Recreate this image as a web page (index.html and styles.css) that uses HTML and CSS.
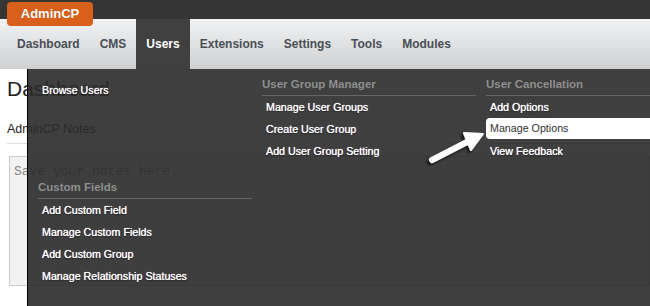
FILE: index.html
```html
<!DOCTYPE html>
<html>
<head>
<meta charset="utf-8">
<link rel="stylesheet" href="styles.css">
</head>
<body>
<div class="topbar">
  <div class="brand">AdminCP</div>
</div>
<nav class="nav">
  <a class="nav-item">Dashboard</a>
  <a class="nav-item">CMS</a>
  <a class="nav-item active">Users</a>
  <a class="nav-item">Extensions</a>
  <a class="nav-item">Settings</a>
  <a class="nav-item">Tools</a>
  <a class="nav-item">Modules</a>
</nav>
<main class="page">
  <h1 class="title">Dashboard</h1>
  <h2 class="subtitle">AdminCP Notes</h2>
  <div class="notes">Save your notes here...</div>
</main>
<div class="menu">
  <div class="col col-first">
    <div class="group-top">
      <a class="item">Browse Users</a>
    </div>
    <div class="group">
      <div class="head">Custom Fields</div>
      <a class="item">Add Custom Field</a>
      <a class="item">Manage Custom Fields</a>
      <a class="item">Add Custom Group</a>
      <a class="item">Manage Relationship Statuses</a>
    </div>
  </div>
  <div class="col">
    <div class="head">User Group Manager</div>
    <a class="item">Manage User Groups</a>
    <a class="item">Create User Group</a>
    <a class="item">Add User Group Setting</a>
  </div>
  <div class="col">
    <div class="head">User Cancellation</div>
    <a class="item">Add Options</a>
    <a class="item hot">Manage Options</a>
    <a class="item">View Feedback</a>
  </div>
  <svg class="arrow" width="80" height="60" viewBox="0 0 80 60">
    <defs>
      <filter id="sh" x="-30%" y="-30%" width="160%" height="160%">
        <feDropShadow dx="-2" dy="2" stdDeviation="1.5" flood-color="#000" flood-opacity="0.8"/>
      </filter>
    </defs>
    <g filter="url(#sh)" fill="#fff" stroke="#fff" stroke-linejoin="round" stroke-linecap="round">
      <line x1="13" y1="41" x2="50" y2="22" stroke-width="6"/>
      <polygon points="64,15 45,14 52,31" stroke-width="2"/>
    </g>
  </svg>
</div>
</body>
</html>
```

FILE: styles.css
```css
* { box-sizing: border-box; }
html, body { margin: 0; padding: 0; }
body {
  width: 650px;
  height: 306px;
  overflow: hidden;
  background: #fff;
  font-family: "Liberation Sans", Arial, sans-serif;
  position: relative;
}
.topbar {
  height: 19px;
  background: #353535;
  padding: 2px 0 0 7px;
}
.brand {
  position: relative;
  z-index: 2;
  display: inline-block;
  width: 86px;
  height: 24px;
  background: #d8601a;
  color: #fff;
  font-weight: bold;
  font-size: 13px;
  line-height: 24px;
  text-align: center;
  border-radius: 4px;
  text-shadow: 0 0 1px rgba(0,0,0,0.2);
}
.nav {
  height: 50px;
  display: flex;
  padding-left: 7px;
  background: linear-gradient(#f1f2f3, #cfd0d2);
}
.nav-item {
  display: block;
  padding: 0 10px;
  font-weight: bold;
  font-size: 12px;
  line-height: 50px;
  color: #4a4e56;
}
.nav-item.active {
  background: #404040;
  color: #fff;
}
.page {
  padding: 0 0 0 7px;
}
.title {
  margin: 0;
  padding-top: 7px;
  font-size: 21px;
  font-weight: normal;
  line-height: 26px;
  color: #222;
}
.subtitle {
  margin: 0;
  padding-top: 17px;
  font-size: 12.5px;
  font-weight: normal;
  line-height: 20px;
  height: 42px;
  color: #222;
  border-bottom: 1px solid #ddd;
}
.notes {
  margin: 12px 0 0 2px;
  height: 130px;
  background: #f2f2f2;
  border: 1px solid #ccc;
  padding: 7px 4px;
  font-family: "Liberation Mono", "Courier New", monospace;
  font-size: 13px;
  color: #888;
}
.menu {
  position: absolute;
  left: 27px;
  top: 69px;
  right: 0;
  bottom: 0;
  background: rgba(42, 42, 42, 0.9);
  border-left: 1px solid #000;
  display: grid;
  grid-template-columns: 214px 214px 1fr;
  column-gap: 10px;
  padding-left: 10px;
  align-items: start;
}
.col { display: flex; flex-direction: column; }
.group-top { padding-top: 10px; height: 103px; }
.head {
  height: 27px;
  padding-top: 8px;
  font-size: 11.5px;
  font-weight: bold;
  line-height: 15px;
  color: #8e8e8e;
  border-bottom: 1px solid #666;
}
.item {
  display: block;
  height: 22px;
  line-height: 22px;
  padding: 0 4px;
  font-size: 10.7px;
  font-weight: normal;
  color: #fff;
  text-shadow: 0 0 0.7px #fff, 0 1px 1px rgba(0,0,0,0.6);
}
.item.hot {
  background: #fff;
  color: #333;
  text-shadow: none;
  border-radius: 4px 0 0 4px;
  height: 21px;
  margin-bottom: 1px;
  line-height: 21px;
}
.arrow {
  position: absolute;
  left: 391px;
  top: 50px;
}
```
